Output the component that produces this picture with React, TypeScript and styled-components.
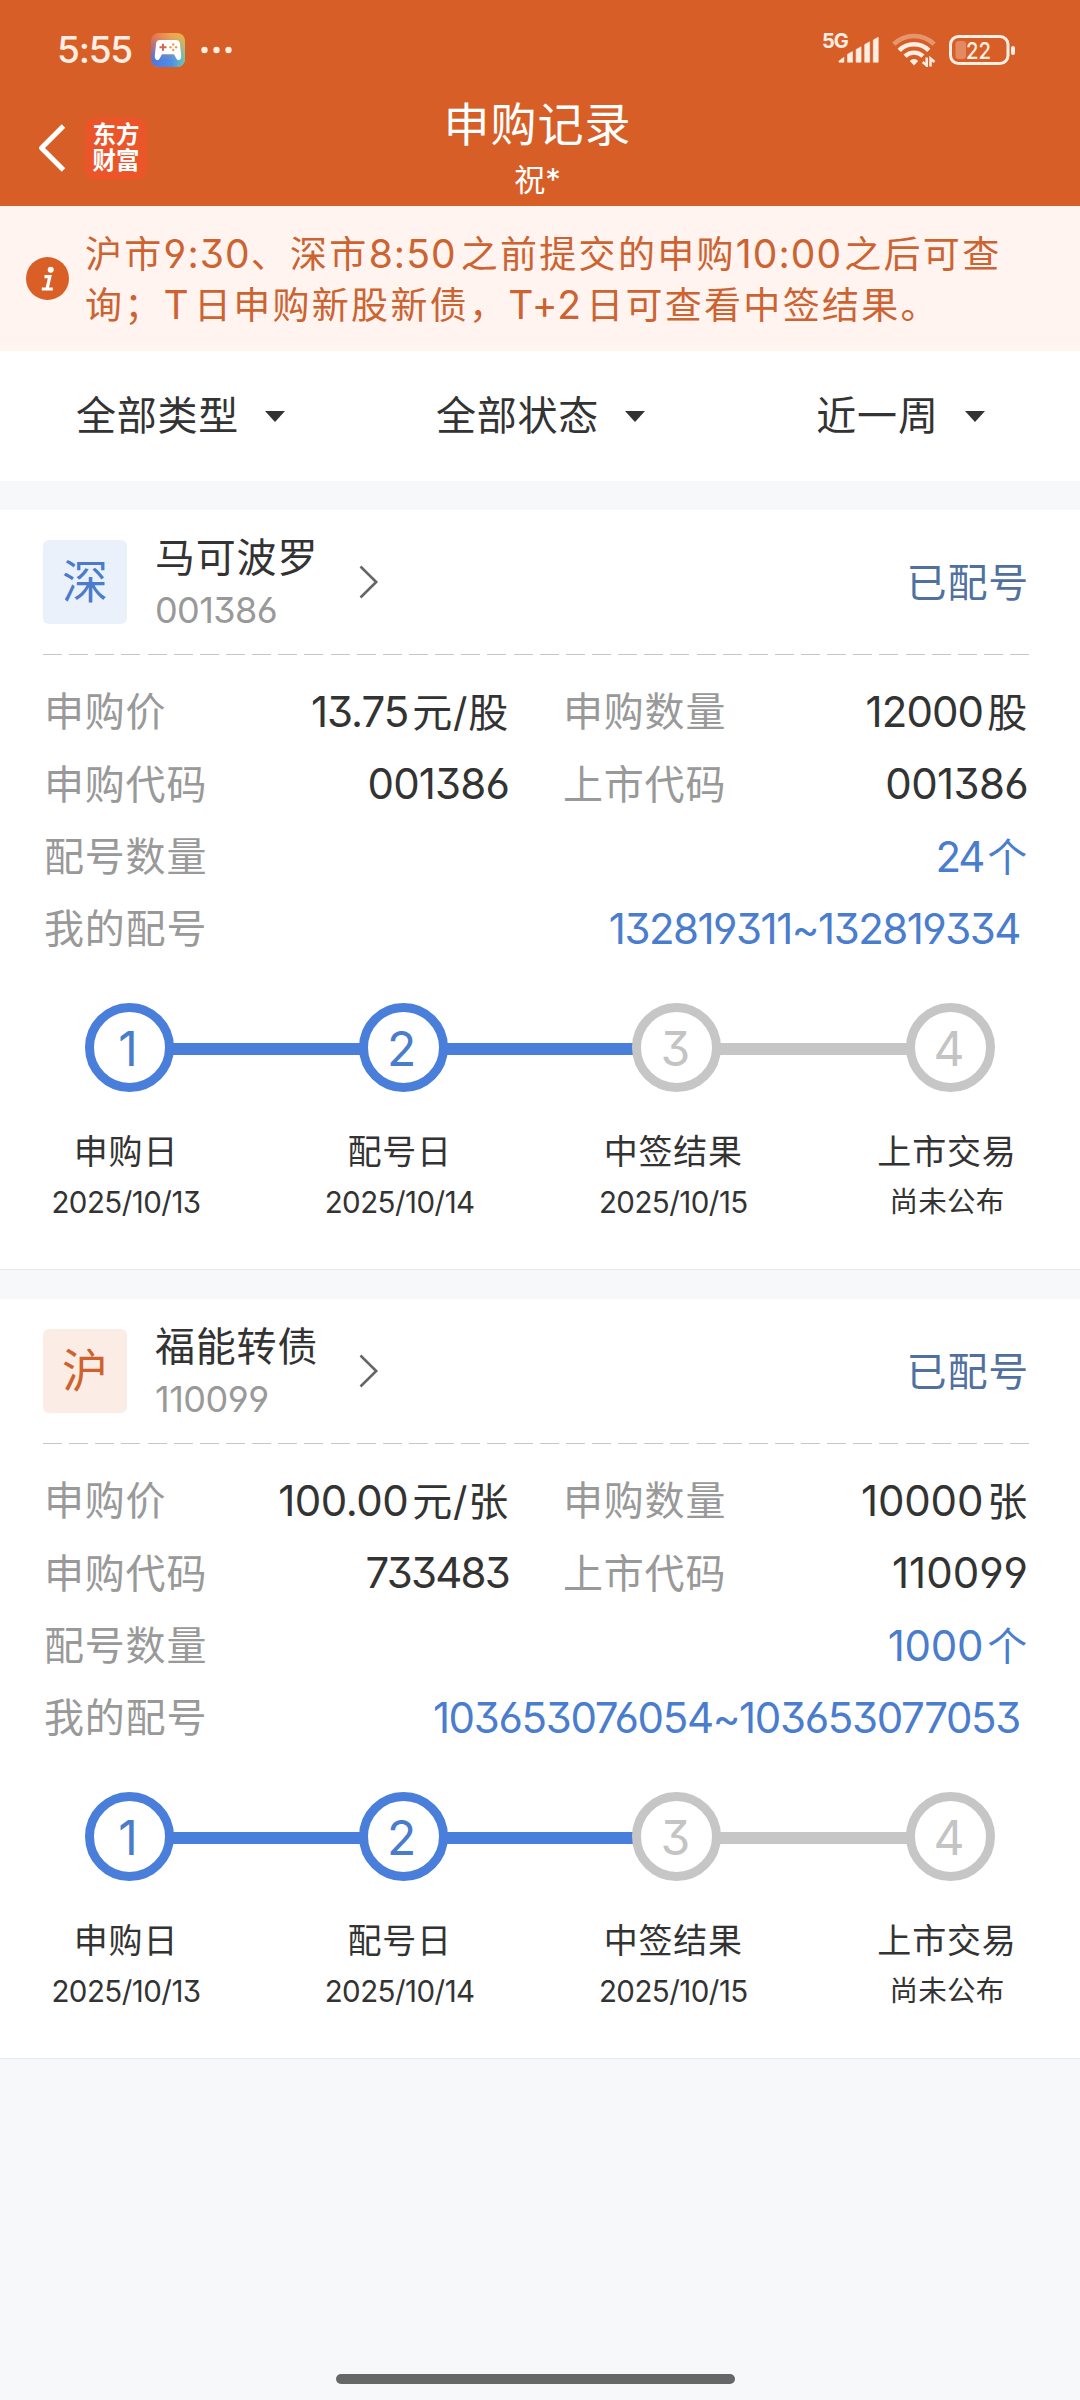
import React from "react";
import styled, { createGlobalStyle } from "styled-components";

const GlobalStyle = createGlobalStyle`
  *, *::before, *::after { box-sizing: border-box; }
  body {
    margin: 0;
    background: #f7f8fa;
    color: #333;
    font-family: Inter, "Noto Sans CJK SC", sans-serif;
    font-feature-settings: "cv03", "cv04", "cv09";
    font-weight: 400;
    line-height: 1.2;
  }
`;

const Screen = styled.div`
  display: flex;
  flex-direction: column;
  width: 1080px;
  height: 2400px;
  background: #f7f8fa;
  overflow: hidden;
`;

const Header = styled.header`
  display: flex;
  flex-direction: column;
  height: 206px;
  background: #d75f27;
  color: #fff;
`;

const StatusBar = styled.div`
  display: flex;
  align-items: center;
  justify-content: space-between;
  height: 100px;
  padding: 0 65px 0 57px;
  color: #ffeee3;
`;

const StatusSide = styled.div<{ $gap: number }>`
  display: flex;
  align-items: center;
  gap: ${(p) => p.$gap}px;
  height: 34px;
`;

const Clock = styled.span`
  width: 78px;
  font-size: 37px;
  line-height: 34px;
  font-weight: 500;
  letter-spacing: -1.2px;
`;

const NavBar = styled.div`
  display: grid;
  grid-template-columns: 300px 1fr 300px;
  height: 106px;
`;

const NavLeft = styled.div`
  display: flex;
  align-items: center;
  gap: 18px;
  padding: 0 0 12px 37px;
`;

const BrandLogo = styled.div`
  display: flex;
  flex-direction: column;
  align-items: center;
  justify-content: center;
  width: 62px;
  height: 63px;
  border-radius: 11px;
  background: #ea5529;
  font-size: 23.5px;
  line-height: 26px;
  font-weight: 700;
`;

const TitleBlock = styled.div`
  display: flex;
  flex-direction: column;
  align-items: center;
  padding-right: 5px;
`;

const Title = styled.h1`
  margin: 0;
  font-size: 46px;
  line-height: 48px;
  font-weight: 400;
  letter-spacing: 1px;
`;

const Account = styled.span`
  margin-top: 4px;
  font-size: 31px;
  line-height: 56px;
`;

const Notice = styled.section`
  display: flex;
  align-items: center;
  gap: 16px;
  height: 145px;
  padding: 0 26px;
  background: #fff4f0;
  color: #cc6330;
`;

const NoticeText = styled.p`
  margin: 0;
  padding-top: 2px;
  font-size: 37px;
  line-height: 51px;
  letter-spacing: 2.3px;
  white-space: nowrap;
`;

const Latin = styled.span<{ $before?: number; $after?: number }>`
  margin: 0 ${(p) => p.$after ?? 0}px 0 ${(p) => p.$before ?? 0}px;
  font-size: 39px;
  line-height: 1;
  letter-spacing: 1.1px;
`;

const FilterBar = styled.nav`
  display: grid;
  grid-template-columns: repeat(3, 360px);
  height: 130px;
  background: #fff;
`;

const Filter = styled.button`
  display: flex;
  align-items: center;
  justify-content: center;
  gap: 26px;
  padding: 0 0 0 1px;
  border: 0;
  background: none;
  color: inherit;
  font: inherit;
  font-size: 40px;
  letter-spacing: 0.8px;
`;

const Caret = styled.span`
  border: 10px solid transparent;
  border-top: 11px solid #333;
  border-bottom: 0;
`;

const Card = styled.article`
  display: flex;
  flex-direction: column;
  height: 760px;
  margin-top: 29px;
  background: #fff;
  border-bottom: 1px solid #e9eaec;
`;

const CardHead = styled.header`
  display: flex;
  align-items: center;
  height: 144px;
  padding: 0 51px 0 43px;
`;

type Tone = "blue" | "orange";

const MarketBadge = styled.span<{ $tone: Tone }>`
  display: flex;
  align-items: center;
  justify-content: center;
  width: 84px;
  height: 84px;
  border-radius: 6px;
  font-size: 46px;
  background: ${(p) => (p.$tone === "blue" ? "#eaf1fb" : "#fbede6")};
  color: ${(p) => (p.$tone === "blue" ? "#4a7cca" : "#cd622c")};
`;

const NameBlock = styled.div`
  display: flex;
  flex-direction: column;
  width: 204px;
  padding-top: 4px;
  margin-left: 28px;
`;

const StockName = styled.span`
  font-size: 40px;
  line-height: 52px;
  letter-spacing: 0.8px;
`;

const StockCode = styled.span<{ $track: number }>`
  color: #999;
  font-size: 36px;
  line-height: 52px;
  letter-spacing: ${(p) => p.$track}px;
`;

const Status = styled.span`
  margin-left: auto;
  padding-top: 1px;
  color: #50719f;
  font-size: 40px;
  letter-spacing: 0.8px;
`;

const DashedRule = styled.div`
  height: 1px;
  margin: 0 51px 21px 43px;
  background: repeating-linear-gradient(90deg, #c6c6c6 0 19px, transparent 19px 26.14px);
`;

const Fields = styled.dl`
  display: grid;
  grid-template-columns: 466px 466px;
  grid-auto-rows: 72.4px;
  column-gap: 53px;
  margin: 0;
  padding-left: 43px;
`;

const Field = styled.div<{ $wide?: boolean }>`
  display: flex;
  align-items: center;
  justify-content: space-between;
  grid-column: ${(p) => (p.$wide ? "1 / -1" : "auto")};
  font-size: 40px;
`;

const FieldLabel = styled.dt`
  padding-left: 1px;
  color: #999;
  letter-spacing: 0.8px;
`;

const FieldValue = styled.dd<{ $link?: boolean; $track?: number; $inset?: number }>`
  margin: 0 ${(p) => p.$inset ?? 0}px 0 0;
  color: ${(p) => (p.$link ? "#4a7dcd" : "#333")};
  font-size: 42px;
  letter-spacing: ${(p) => p.$track ?? 0}px;
`;

const Unit = styled.span`
  margin-left: 4px;
  font-size: 40px;
  letter-spacing: 0.8px;
`;

const Track = styled.div`
  display: flex;
  align-items: center;
  height: 89px;
  margin-top: 37px;
  padding: 0 85px;
`;

const StepDot = styled.span<{ $done: boolean }>`
  display: flex;
  align-items: center;
  justify-content: center;
  flex: none;
  width: 89px;
  height: 89px;
  padding: 3px 3px 0 0;
  border: 9px solid ${(p) => (p.$done ? "#497fdb" : "#c6c6c6")};
  border-radius: 50%;
  color: ${(p) => (p.$done ? "#4a7ccc" : "#c4c4c4")};
  font-size: 48px;
  font-weight: 400;
`;

const StepLine = styled.span<{ $done: boolean }>`
  flex: 1;
  height: 12px;
  margin: 3px -2px 0;
  background: ${(p) => (p.$done ? "#497fdb" : "#c6c6c6")};
`;

const StepLabels = styled.div`
  display: flex;
  justify-content: space-between;
  margin-top: 35px;
  padding: 0 28px 0 21px;
`;

const StepLabel = styled.div`
  display: flex;
  flex-direction: column;
  align-items: center;
  width: 210px;
  line-height: 50px;
`;

const StepName = styled.span`
  font-size: 34px;
  letter-spacing: 0.8px;
`;

const StepDate = styled.span<{ $numeric: boolean }>`
  font-size: ${(p) => (p.$numeric ? 29.5 : 28.5)}px;
  letter-spacing: ${(p) => (p.$numeric ? -0.55 : 0.2)}px;
`;

const HomeIndicator = styled.div`
  width: 399px;
  height: 10px;
  margin: auto auto 16px 336px;
  border-radius: 5px;
  background: #666867;
`;

const GameIcon = () => (
  <svg width="34" height="34" viewBox="0 0 34 34">
    <defs>
      <linearGradient id="gameBase" x1="0" y1="0" x2="1" y2="0">
        <stop offset="0" stopColor="#e8704e" />
        <stop offset="0.6" stopColor="#eda352" />
        <stop offset="1" stopColor="#e9b64d" />
      </linearGradient>
      <linearGradient id="gameCool" x1="0" y1="0" x2="1" y2="0">
        <stop offset="0" stopColor="#4f74e0" />
        <stop offset="0.6" stopColor="#4d8fe6" />
        <stop offset="1" stopColor="#6cc7b4" />
      </linearGradient>
      <linearGradient id="gameFade" x1="0" y1="0" x2="0" y2="1">
        <stop offset="0.1" stopColor="#000" />
        <stop offset="0.8" stopColor="#fff" />
      </linearGradient>
      <mask id="gameMask">
        <rect width="34" height="34" fill="url(#gameFade)" />
      </mask>
    </defs>
    <rect width="34" height="34" rx="8" fill="url(#gameBase)" />
    <rect width="34" height="34" rx="8" fill="url(#gameCool)" mask="url(#gameMask)" />
    <path
      d="M9 7h16c2.400 0 3.600 1.300 3.900 3.500l1.300 12.500c.3 4.600-3.600 5.400-5 2.200l-1.500-2.800c-.4-.8-1-1.100-1.800-1.100h-9.800c-.8 0-1.400.3-1.800 1.100l-1.500 2.800c-1.400 3.200-5.300 2.400-5-2.200L5.100 10.500C5.400 8.300 6.600 7 9 7z"
      fill="#fff"
    />
    <path d="M12 10.800v7M8.500 14.300h7" stroke="#d6664f" strokeWidth="2" />
    <g fill="#e2a04d">
      <circle cx="22.300" cy="11.500" r="1.200" />
      <circle cx="22.300" cy="17" r="1.200" />
      <circle cx="19.500" cy="14.300" r="1.200" />
      <circle cx="25.100" cy="14.300" r="1.200" />
    </g>
  </svg>
);

const MoreDots = () => (
  <svg width="32" height="8" viewBox="0 0 32 8" fill="currentColor">
    <circle cx="3.500" cy="4" r="3.200" />
    <circle cx="15.500" cy="4" r="3.200" />
    <circle cx="27.500" cy="4" r="3.200" />
  </svg>
);

const SignalBox = styled.span`
  display: flex;
  align-items: flex-start;
  width: 57px;
  height: 34px;
`;

const NetworkType = styled.span`
  width: 16px;
  font-size: 20px;
  line-height: 17px;
  font-weight: 700;
  letter-spacing: -1px;
  white-space: nowrap;
`;

const Signal = () => (
  <SignalBox>
    <NetworkType>5G</NetworkType>
    <svg width="43" height="34" viewBox="16 0 43 34" fill="currentColor">
      <path
        d="M17 28.600 22.200 24.500V29.800H17zM26 21.500 31.200 18.600V29.800H26zM35 16.500 40.200 13.500V29.800H35zM44 11.300 49.200 8.300V29.800H44zM53 6.500 58.200 3.500V29.800H53z"
        stroke="currentColor"
        strokeWidth="0.600"
        strokeLinejoin="round"
      />
    </svg>
  </SignalBox>
);

const Wifi = () => (
  <svg width="44" height="34" viewBox="0 0 44 34" fill="none" stroke="currentColor">
    <path d="M1.800 11.200a29 29 0 0 1 40.400 0" strokeWidth="4.600" opacity="0.380" />
    <path d="M7.200 17.400a21 21 0 0 1 29.600 0" strokeWidth="4.600" />
    <path d="M13 23.200a13 13 0 0 1 18 0" strokeWidth="4.400" />
    <path d="M22 32.500l-4.200-4.500c2.300-2.700 6.100-2.700 8.400 0z" fill="currentColor" stroke="none" />
    <path d="M34.700 24.500v8l-4-3.500M38.500 33.500v-8l4 3.500" strokeWidth="2.500" />
  </svg>
);

const Battery = () => (
  <svg width="66" height="32" viewBox="0 0 66 32">
    <rect x="1.500" y="2.500" width="57.500" height="27" rx="8" fill="none" stroke="currentColor" strokeWidth="3" />
    <rect x="6.500" y="7" width="10.500" height="18" rx="3" fill="#e48a60" />
    <rect x="62" y="12" width="4" height="9" rx="2" fill="currentColor" />
    <text x="29.500" y="24.500" textAnchor="middle" fontSize="23" fontWeight="500" fill="currentColor" textLength="25" lengthAdjust="spacingAndGlyphs">
      22
    </text>
  </svg>
);

const BackArrow = () => (
  <svg width="30" height="50" viewBox="0 0 30 50" fill="none" stroke="#fff" strokeWidth="5">
    <path d="M26.500 3 4.500 25l22 22" strokeLinejoin="round" />
  </svg>
);

const InfoIcon = () => (
  <svg width="43" height="43" viewBox="0 0 43 43">
    <circle cx="21.500" cy="21.500" r="21.500" fill="#d95f27" />
    <circle cx="24.700" cy="12.800" r="3" fill="#fff" />
    <path d="M18.500 19.700h5.300l-2.600 11.500M15.800 32h11" fill="none" stroke="#fff" strokeWidth="3.200" />
  </svg>
);

const Chevron = () => (
  <svg width="20" height="34" viewBox="0 0 20 34" fill="none" stroke="#666" strokeWidth="2.600">
    <path d="M1.500 1.500 17.200 17 1.500 32.500" />
  </svg>
);

interface Step {
  name: string;
  date: string;
  done: boolean;
}

interface NumberText {
  text: string;
  track: number;
  unit?: string;
}

interface RecordItem {
  tone: Tone;
  market: string;
  name: string;
  code: NumberText;
  price: NumberText;
  amount: NumberText;
  applyCode: NumberText;
  listCode: NumberText;
  count: NumberText;
  numbers: NumberText;
}

const records: RecordItem[] = [
  {
    tone: "blue",
    market: "深",
    name: "马可波罗",
    code: { text: "001386", track: -0.6 },
    price: { text: "13.75", unit: "元/股", track: -1.1 },
    amount: { text: "12000", unit: "股", track: -0.9 },
    applyCode: { text: "001386", track: -0.85 },
    listCode: { text: "001386", track: -0.65 },
    count: { text: "24", unit: "个", track: -2.2 },
    numbers: { text: "132819311~132819334", track: -1.5 },
  },
  {
    tone: "orange",
    market: "沪",
    name: "福能转债",
    code: { text: "110099", track: -0.5 },
    price: { text: "100.00", unit: "元/张", track: -0.5 },
    amount: { text: "10000", unit: "张", track: -0.2 },
    applyCode: { text: "733483", track: -1.8 },
    listCode: { text: "110099", track: 0 },
    count: { text: "1000", unit: "个", track: -0.3 },
    numbers: { text: "103653076054~103653077053", track: -1.35 },
  },
];

const steps: Step[] = [
  { name: "申购日", date: "2025/10/13", done: true },
  { name: "配号日", date: "2025/10/14", done: true },
  { name: "中签结果", date: "2025/10/15", done: false },
  { name: "上市交易", date: "尚未公布", done: false },
];

interface FieldRowProps {
  label: string;
  value: NumberText;
  wide?: boolean;
  inset?: number;
}

const FieldRow = ({ label, value, wide, inset }: FieldRowProps) => (
  <Field $wide={wide}>
    <FieldLabel>{label}</FieldLabel>
    <FieldValue $link={wide} $track={value.track} $inset={inset}>
      {value.text}
      {value.unit && <Unit>{value.unit}</Unit>}
    </FieldValue>
  </Field>
);

const RecordCard = ({ item }: { item: RecordItem }) => (
  <Card>
    <CardHead>
      <MarketBadge $tone={item.tone}>{item.market}</MarketBadge>
      <NameBlock>
        <StockName>{item.name}</StockName>
        <StockCode $track={item.code.track}>{item.code.text}</StockCode>
      </NameBlock>
      <Chevron />
      <Status>已配号</Status>
    </CardHead>
    <DashedRule />
    <Fields>
      <FieldRow label="申购价" value={item.price} />
      <FieldRow label="申购数量" value={item.amount} />
      <FieldRow label="申购代码" value={item.applyCode} />
      <FieldRow label="上市代码" value={item.listCode} />
      <FieldRow label="配号数量" value={item.count} wide />
      <FieldRow label="我的配号" value={item.numbers} wide inset={8} />
    </Fields>
    <Track>
      {steps.map((step, i) => (
        <React.Fragment key={step.name}>
          {i > 0 && <StepLine $done={steps[i - 1].done} />}
          <StepDot $done={step.done}>{i + 1}</StepDot>
        </React.Fragment>
      ))}
    </Track>
    <StepLabels>
      {steps.map((step) => (
        <StepLabel key={step.name}>
          <StepName>{step.name}</StepName>
          <StepDate $numeric={/^\d/.test(step.date)}>{step.date}</StepDate>
        </StepLabel>
      ))}
    </StepLabels>
  </Card>
);

export default function App() {
  return (
    <Screen>
      <GlobalStyle />
      <Header>
        <StatusBar>
          <StatusSide $gap={16}>
            <Clock>5:55</Clock>
            <GameIcon />
            <MoreDots />
          </StatusSide>
          <StatusSide $gap={13}>
            <Signal />
            <Wifi />
            <Battery />
          </StatusSide>
        </StatusBar>
        <NavBar>
          <NavLeft>
            <BackArrow />
            <BrandLogo>
              <span>东方</span>
              <span>财富</span>
            </BrandLogo>
          </NavLeft>
          <TitleBlock>
            <Title>申购记录</Title>
            <Account>祝*</Account>
          </TitleBlock>
        </NavBar>
      </Header>
      <Notice>
        <InfoIcon />
        <NoticeText>
          沪市<Latin>9:30</Latin>、深市<Latin $after={4}>8:50</Latin>之前提交的申购
          <Latin $after={2}>10:00</Latin>之后可查
          <br />
          询；<Latin $after={4}>T</Latin>日申购新股新债，<Latin>T+2</Latin>
          <Latin $before={4} />日可查看中签结果。
        </NoticeText>
      </Notice>
      <FilterBar>
        {["全部类型", "全部状态", "近一周"].map((label) => (
          <Filter key={label}>
            {label}
            <Caret />
          </Filter>
        ))}
      </FilterBar>
      {records.map((item) => (
        <RecordCard key={item.name} item={item} />
      ))}
      <HomeIndicator />
    </Screen>
  );
}
